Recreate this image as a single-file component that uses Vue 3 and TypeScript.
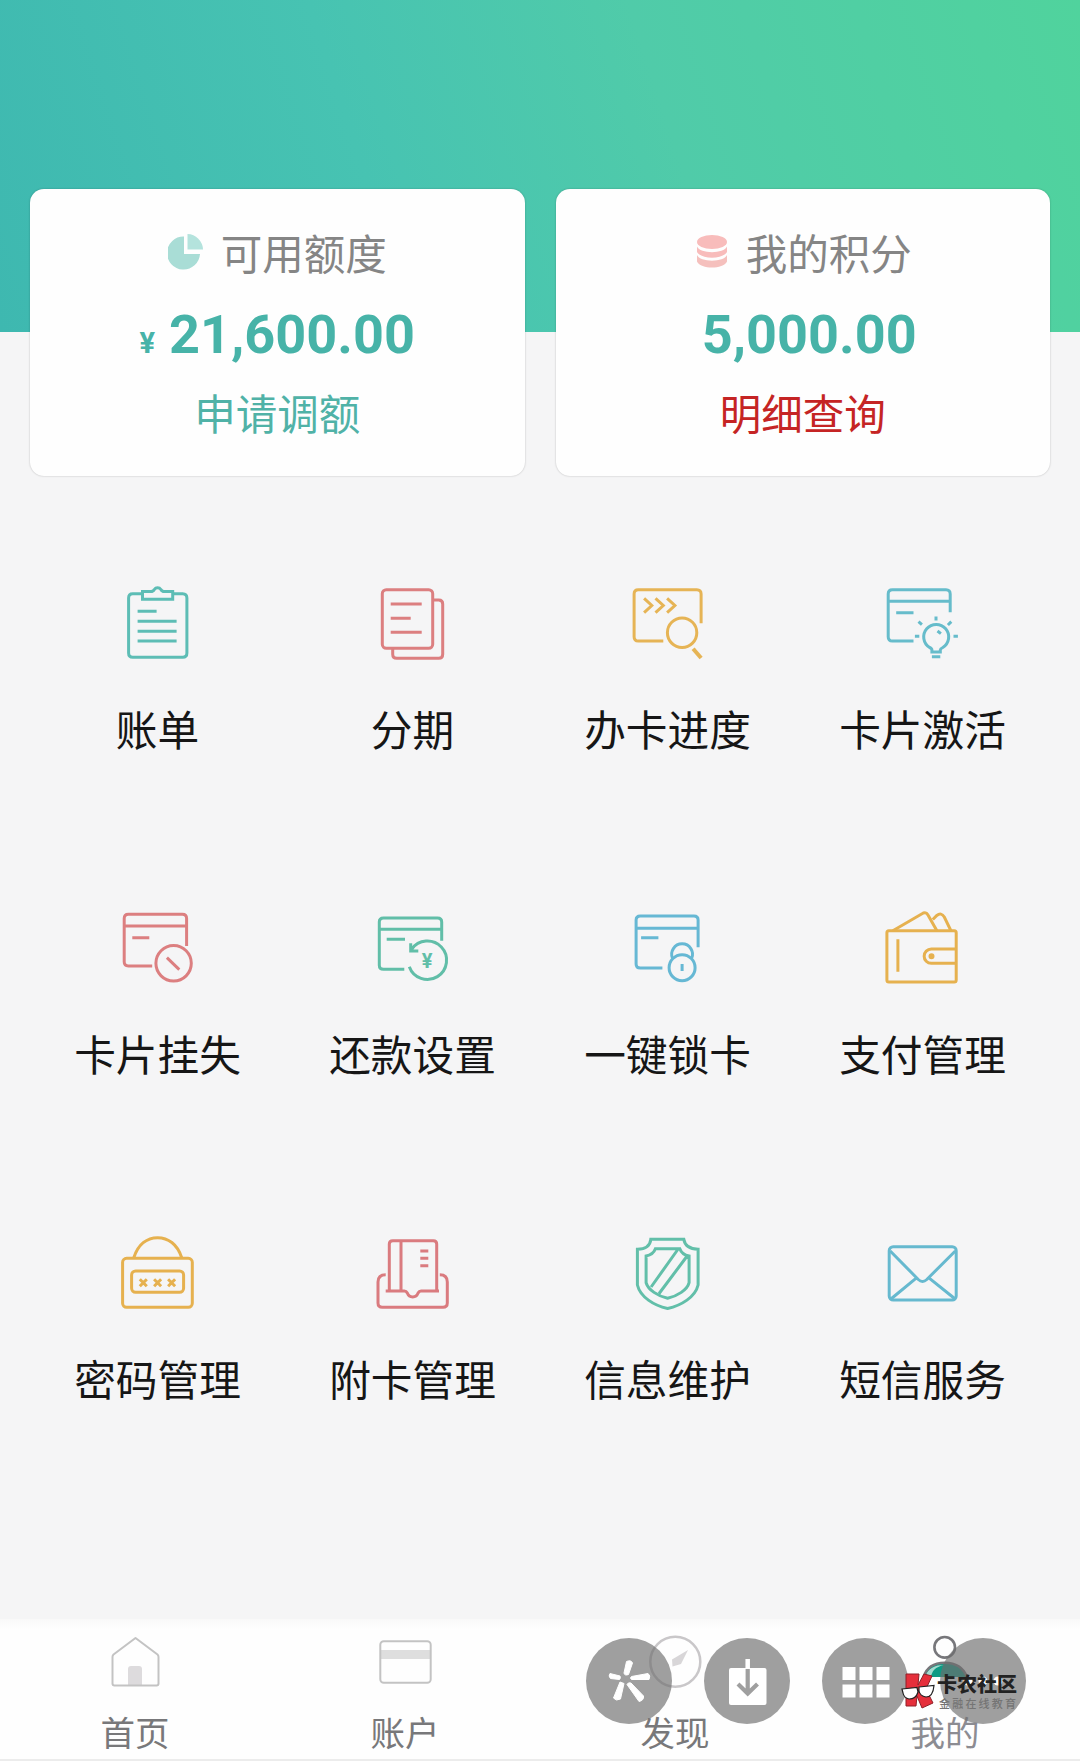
<script setup lang="ts">
interface Service {
  id: string
  label: string
  color: string
}

const services: Service[] = [
  { id: 'bill', label: '账单', color: '#5dbdb5' },
  { id: 'instalment', label: '分期', color: '#dc7f80' },
  { id: 'progress', label: '办卡进度', color: '#e6b455' },
  { id: 'activate', label: '卡片激活', color: '#66bccb' },
  { id: 'loss', label: '卡片挂失', color: '#dc7f80' },
  { id: 'repay', label: '还款设置', color: '#61bea8' },
  { id: 'lock', label: '一键锁卡', color: '#66b8d4' },
  { id: 'wallet', label: '支付管理', color: '#e6b14f' },
  { id: 'password', label: '密码管理', color: '#e6b14f' },
  { id: 'extra', label: '附卡管理', color: '#da7b7f' },
  { id: 'shield', label: '信息维护', color: '#62bfa9' },
  { id: 'sms', label: '短信服务', color: '#66b9cf' },
]

const tabs = [
  { id: 'home', label: '首页' },
  { id: 'account', label: '账户' },
  { id: 'discover', label: '发现' },
  { id: 'mine', label: '我的' },
]
</script>

<template>
  <div class="page">
    <header class="hero"></header>

    <section class="cards">
      <div class="card">
        <div class="card-head">
          <svg class="pie" width="36" height="40" viewBox="0 0 36 40">
            <path d="M16 4.500A16.500 16.500 0 1 0 32 22H16Z" fill="#a9ddd6" />
            <path d="M19.500 2A16 16 0 0 1 35 17.500H19.500Z" fill="#b4e3dd" />
          </svg>
          <span>可用额度</span>
        </div>
        <div class="amount"><small>¥</small>21,600.00</div>
        <div class="link">申请调额</div>
      </div>
      <div class="card">
        <div class="card-head points">
          <svg class="coins" width="32" height="36" viewBox="0 0 32 36">
            <ellipse cx="16" cy="9" rx="15" ry="7" fill="#f8bcbb" />
            <path d="M1 10.500C4 18 28 18 31 10.500V16C27 23.500 5 23.500 1 16Z" fill="#f8bcbb" transform="translate(0 3)" />
            <path d="M1 20C4 27.500 28 27.500 31 20V26.500C27 34.500 5 34.500 1 26.500Z" fill="#f5c0bd" transform="translate(0 2)" />
          </svg>
          <span>我的积分</span>
        </div>
        <div class="amount points-amount">5,000.00</div>
        <div class="link red">明细查询</div>
      </div>
    </section>

    <main class="grid">
      <div v-for="s in services" :key="s.id" class="service">
        <svg class="icon" :style="{ color: s.color }" width="80" height="80" viewBox="0.700 0 80 80">
          <g v-if="s.id === 'bill'">
            <path d="M25.200 11.700H15.500Q11.300 11.700 11.300 16V71Q11.300 75.300 15.500 75.300H65.400Q69.600 75.300 69.600 71V16Q69.600 11.700 65.400 11.700H55.400" />
            <path d="M25.200 9.500H33.500Q36 9.500 37 7.500Q38.200 5.800 40.300 5.800T43.600 7.500Q44.600 9.500 47 9.500H55.400V17.300H25.200Z" />
            <path d="M20.300 29.300H39.300M20.300 39.300H59.300M20.300 49.300H59.300M20.300 59H59.300" />
          </g>
          <g v-else-if="s.id === 'instalment'">
            <rect x="10" y="7.700" width="50.400" height="58.600" rx="4" />
            <path d="M60.400 18H66.500Q70.400 18 70.400 22V72.300Q70.400 76.300 66.500 76.300H24.500Q20.400 76.300 20.400 72.300V66.500" />
            <path d="M18.400 22H49.400M18.400 36.300H38.400M18.400 50.300H49.400" />
          </g>
          <g v-else-if="s.id === 'progress'">
            <path d="M73.800 41.300V12Q73.800 7.700 69.500 7.700H11Q6.800 7.700 6.800 12V54.700Q6.800 59 11 59H36" />
            <path d="M16.800 16.300L24.500 23.500L16.800 30.700M28.200 16.300L36 23.500L28.200 30.700M39.800 16.300L47.600 23.500L39.800 30.700" />
            <circle cx="54.800" cy="50.700" r="14.700" />
            <path d="M65.800 66.700L73.800 76" stroke-width="4" />
          </g>
          <g v-else-if="s.id === 'activate'">
            <path d="M67.900 30.300V12Q67.900 7.700 63.700 7.700H10.100Q5.900 7.700 5.900 12V54.700Q5.900 59 10.100 59H31.200M5.900 19.300H67.900M13.900 30.700H31.200" />
            <path d="M49.600 70V68Q49.600 66.500 47.300 65.500A12.500 12.500 0 1 1 60.500 65.500Q58 66.700 58 68V70ZM49.600 74.700H58" />
            <path d="M55.200 49L58.600 51.600M53.700 34.500V38.500M36.200 39.700L39.600 42.700M69 39.700L65.600 43M32.600 54.300H37M71.200 54.300H75.600" />
          </g>
          <g v-else-if="s.id === 'loss'">
            <path d="M69.300 39V11.500Q69.300 7.300 65.100 7.300H11.100Q6.900 7.300 6.900 11.500V54.800Q6.900 59 11.100 59H34.900M6.900 19H69.300M15 30.700H32" />
            <circle cx="56.300" cy="56.300" r="17.700" />
            <path d="M49.600 50.700L62 62.700" />
          </g>
          <g v-else-if="s.id === 'repay'">
            <path d="M69.400 33.700V15Q69.400 11 65.200 11H11.200Q7 11 7 15V58.300Q7 62.300 11.200 62.300H32M7 22.300H69.400M14.400 32.300H32.700" />
            <path d="M37 59.700A19.200 19.200 0 1 0 39.300 42.300M38.400 36.300V44H46" />
            <text x="54.700" y="60.800" text-anchor="middle">¥</text>
          </g>
          <g v-else-if="s.id === 'lock'">
            <path d="M70.800 40.300V13Q70.800 9 66.600 9H13Q8.800 9 8.800 13V57Q8.800 61 13 61H35.100M8.800 21.300H70.800M13.800 30.700H31.100" />
            <circle cx="54.800" cy="60.700" r="13" />
            <path d="M45.300 51.500A10.400 10.400 0 1 1 64.300 51.500M54.800 57V64" />
          </g>
          <g v-else-if="s.id === 'wallet'">
            <rect x="4.600" y="23.700" width="69.300" height="51.300" rx="2" />
            <path d="M15.600 32.300V64.700M73.900 42H49A7.100 7.100 0 0 0 49 56.300H73.900" />
            <circle cx="49.200" cy="49.200" r="1.500" fill="currentColor" />
            <path d="M10.500 23.700L41 6Q44 4.800 45.700 8L54.600 23.700M50.500 12.500L54.500 8.500Q59 5 62 10L68.600 23.700" />
          </g>
          <g v-else-if="s.id === 'password'">
            <rect x="5.300" y="26.300" width="69.700" height="49" rx="4" />
            <rect x="14.300" y="39" width="52" height="21.300" rx="4" />
            <path d="M16.600 25.500C21 12 30 5.700 40.300 5.700S60 12 64.300 25.500" />
            <path d="M22.500 47.200L29.500 54.200M29.500 47.200L22.500 54.200M36.800 47.200L43.800 54.200M43.800 47.200L36.800 54.200M50.800 47.200L57.800 54.200M57.800 47.200L50.800 54.200" />
          </g>
          <g v-else-if="s.id === 'extra'">
            <path d="M17 58V12Q17 8.700 20.500 8.700H61Q64.400 8.700 64.400 12V58M28.700 8.700V58M48 19H56M48 26.300H56M48 33.700H56" />
            <path d="M13.400 42.700Q5.700 42.700 5.700 50V71Q5.700 75.300 10 75.300H70.700Q75 75.300 75 71V50Q75 42.700 67.500 42.700" />
            <path d="M13.400 59H32Q34 59 35 61Q36.500 64.900 40.400 64.900T45.800 61Q46.800 59 48.800 59H66.700" />
          </g>
          <g v-else-if="s.id === 'shield'">
            <path d="M23.500 7.300H56.500Q58 17 70.800 17.300V53C68 65 54 73.500 40.300 76.500C26.500 73.500 13 65 10.100 53V17.300Q22.500 17 23.500 7.300Z" />
            <path d="M28.100 16.700H52.500Q54.500 22.500 61.800 24V50.700C60 58 50 64 40.300 66.300C30.500 64 21 58 18.800 50.700V24Q26 22.500 28.100 16.700ZM50.500 17.500L23.800 55M59.500 24.500L31.800 61.500" />
          </g>
          <g v-else>
            <rect x="6.900" y="14.700" width="67" height="53.300" rx="4" />
            <path d="M7.900 19L36 47.500Q40.200 51.500 44.500 47.500L73 19M8.600 67L33.600 46.300M47.200 46.300L72.900 67" />
          </g>
        </svg>
        <span class="service-label">{{ s.label }}</span>
      </div>
    </main>

    <nav class="tabbar">
      <div v-for="t in tabs" :key="t.id" class="tab" :class="t.id">
        <svg width="60" height="60" viewBox="0 0 60 60" fill="none" stroke="#c3c3c3" stroke-width="2">
          <g v-if="t.id === 'home'">
            <path d="M23 52V36Q23 33 26 33H34Q37 33 37 36V52Z" fill="#dddbdd" stroke="none" />
            <path d="M30.500 5L52.500 21.500Q53.500 22.500 53.500 24V50.500Q53.500 52.500 51.500 52.500H9.500Q7.500 52.500 7.500 50.500V24Q7.500 22.500 8.500 21.500Z" stroke-linejoin="round" />
          </g>
          <g v-else-if="t.id === 'account'">
            <path d="M5 17H56V26H5Z" fill="#dedede" stroke="none" />
            <rect x="5.300" y="8.300" width="50.400" height="41.400" rx="3.500" />
          </g>
          <g v-else-if="t.id === 'discover'">
            <circle cx="30.300" cy="28.700" r="25" stroke="#c9c7c9" stroke-width="2.500" />
            <path d="M43 17L27 26.500L27.500 33.500L36 31Z" fill="#d8d6d8" stroke="none" />
          </g>
          <g v-else>
            <path d="M8.500 44Q13 29.700 29.700 29.700T52 44Z" fill="#0f9a84" stroke="none" />
            <path d="M10 44C13 35 20 32 29 32C20 34 17 38 16 44Z" fill="#a5dacf" stroke="none" />
            <circle cx="29.700" cy="14.300" r="10.300" stroke="#77777b" stroke-width="2.600" />
            <path d="M8.500 44Q13 29.700 29.700 29.700T52 44" stroke="#77777b" stroke-width="2.600" />
          </g>
        </svg>
        <span>{{ t.label }}</span>
      </div>
    </nav>

    <div class="tool star">
      <svg width="86" height="86" viewBox="0 0 86 86" fill="#fff" stroke="#fff" stroke-width="1" stroke-linejoin="round">
        <path d="M40.500 23.500Q45 21.500 46.500 25L42.500 36.500Q38.500 38 38 35Z" />
        <path d="M45.500 38.500L62 35.500Q65 37.500 63 41.500L45.500 41.500Q43.500 40 45.500 38.500Z" />
        <path d="M24 35.500L34 38Q35 40 33.500 41.500L24.500 40.500Q22 38 24 35.500Z" />
        <path d="M34 44L38 45.500L34.500 61Q30 63.500 27.500 60Z" />
        <path d="M41 46.500Q42 44 45 45L57.500 58Q58 62.500 53 63.500Z" />
      </svg>
    </div>
    <div class="tool download">
      <svg width="86" height="86" viewBox="0 0 86 86">
        <rect x="25" y="30" width="37.500" height="37" rx="2" fill="#fff" />
        <path d="M43.700 21V31" stroke="#fff" stroke-width="4.500" />
        <path d="M43.700 31V55M34 46L43.700 55.500L53.500 46" fill="none" stroke="#9f9f9f" stroke-width="4.200" />
      </svg>
    </div>
    <div class="tool apps">
      <svg width="86" height="86" viewBox="0 0 86 86" fill="#fff">
        <path d="M20.500 29h13v13h-13zM37.500 29h13v13h-13zM54.500 29h13v13h-13zM20.500 46.500h13v13h-13zM37.500 46.500h13v13h-13zM54.500 46.500h13v13h-13z" />
      </svg>
    </div>
    <div class="tool more">
      <svg width="86" height="86" viewBox="0 0 86 86" fill="#fff">
        <circle cx="28" cy="43" r="4.500" /><circle cx="43" cy="43" r="4.500" /><circle cx="58" cy="43" r="4.500" />
      </svg>
    </div>

    <div class="brand">
      <svg width="36" height="38" viewBox="0 0 36 38">
        <path d="M6 2H19L18 13L24 2L32 4L26 17L33 31L22 36L17 24L16 34L6 34Z" fill="#e52f3b" stroke="#8e2028" stroke-width="1" />
        <path d="M2 17L17 15.500L18 20Q16 27 9 27Q4 26 3 21ZM19 15L34 13.500Q33 25 26 25Q20 24 19 19Z" fill="#fff" stroke="#222" stroke-width="1.200" />
      </svg>
      <div class="brand-text">
        <b>卡农社区</b>
        <span>金融在线教育</span>
      </div>
    </div>
  </div>
</template>

<style>
body {
  margin: 0;
}
</style>

<style scoped>
.page {
  position: relative;
  width: 1080px;
  height: 1761px;
  overflow: hidden;
  display: flex;
  flex-direction: column;
  background: #f5f5f6;
  font-family: Roboto, 'Noto Sans CJK SC', sans-serif;
}
.hero {
  flex: none;
  height: 332px;
  background: linear-gradient(72deg, #3eb8b0 0%, #47c3b2 35%, #50cba9 62%, #50d39d 100%);
}
.cards {
  display: flex;
  flex: none;
  gap: 31px;
  margin: -143px 30px 0;
}
.card {
  flex: 1;
  box-sizing: border-box;
  height: 287px;
  padding-top: 37px;
  border-radius: 14px;
  background: #fefefe;
  box-shadow: 0 0 2px rgba(0, 0, 0, 0.25);
  display: flex;
  flex-direction: column;
  align-items: center;
}
.card-head {
  display: flex;
  align-items: center;
  height: 60px;
  font-size: 41.5px;
  line-height: 60px;
  color: #858585;
}
.points {
  padding-left: 2px;
}
.pie {
  margin: -9px 17px 0 0;
}
.coins {
  margin: -11px 18px 0 0;
}
.amount {
  height: 76px;
  margin-top: 11px;
  font-size: 54px;
  font-weight: 700;
  line-height: 76px;
  color: #47b3a8;
}
.amount small {
  margin-right: 14px;
  font-size: 29px;
}
.points-amount {
  padding-left: 13px;
}
.link {
  height: 60px;
  margin-top: 13px;
  font-size: 41.5px;
  line-height: 60px;
  color: #50b2a7;
}
.link.red {
  color: #c52424;
}
.grid {
  flex: none;
  display: grid;
  grid-template-columns: repeat(4, 1fr);
  grid-auto-rows: 325px;
  margin: 106px 30px 0;
}
.service {
  display: flex;
  flex-direction: column;
  align-items: center;
}
.icon {
  fill: none;
  stroke: currentColor;
  stroke-width: 3;
}
.icon text {
  fill: currentColor;
  stroke: none;
  font: 700 20px Roboto, sans-serif;
}
.service-label {
  margin-top: 40px;
  font-size: 41.700px;
  line-height: 60px;
  color: #161616;
}
.tabbar {
  position: absolute;
  left: 0;
  right: 0;
  bottom: 0;
  box-sizing: border-box;
  height: 142px;
  padding-top: 14px;
  display: flex;
  background: linear-gradient(#f9f9f9, #fefefe 10px);
  border-bottom: 2px solid #ececec;
}
.tab {
  flex: 1;
  display: flex;
  flex-direction: column;
  align-items: center;
  font-size: 34.500px;
  line-height: 50px;
  color: #78787a;
}
.tab span {
  margin-top: 16px;
}
.tab.mine span {
  color: #8c8c92;
}
.tool {
  position: absolute;
  top: 1638px;
  width: 86px;
  height: 86px;
  border-radius: 50%;
  background: rgba(110, 110, 110, 0.66);
}
.star {
  left: 586px;
}
.download {
  left: 704px;
}
.apps {
  left: 822px;
}
.more {
  left: 940px;
}
.brand {
  position: absolute;
  left: 900px;
  top: 1672px;
  display: flex;
  gap: 1px;
}
.brand-text {
  display: flex;
  flex-direction: column;
  font-family: 'Noto Sans CJK SC', sans-serif;
  white-space: nowrap;
}
.brand b {
  font-size: 20px;
  font-weight: 900;
  line-height: 24px;
  color: #222;
}
.brand-text span {
  margin: 1px 0 0 2px;
  font-size: 11px;
  font-weight: 500;
  letter-spacing: 2.200px;
  line-height: 12px;
  color: #747474;
}
</style>
